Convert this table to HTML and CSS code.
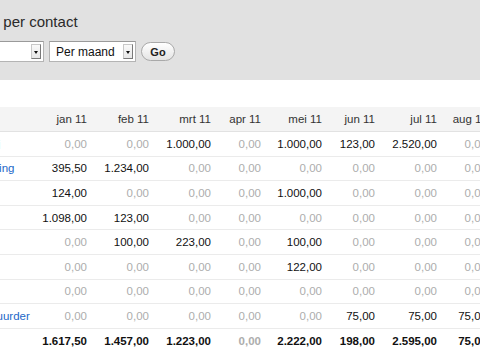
FILE: index.html
```html
<!DOCTYPE html>
<html lang="nl">
<head>
    <meta charset="UTF-8">
    <title>Omzet per contact</title>
    <link rel="stylesheet" href="styles.css">
</head>
<body>
    <div class="page">
        <div class="toolbar">
            <h1>Omzet per contact</h1>
            <form class="filters">
                <div class="select year"><span>2011</span><i class="arrow"></i></div>
                <div class="select period"><span>Per maand</span><i class="arrow"></i></div>
                <button type="button" class="go">Go</button>
            </form>
        </div>

        <table class="report">
            <thead>
                <tr>
                    <th class="name">Contact</th>
                    <th class="w62">jan 11</th>
                    <th class="w62">feb 11</th>
                    <th class="w62">mrt 11</th>
                    <th class="w50">apr 11</th>
                    <th class="w61">mei 11</th>
                    <th class="w53">jun 11</th>
                    <th class="w62">jul 11</th>
                    <th class="w50">aug 11</th>
                    <th class="w62">sep 11</th>
                </tr>
            </thead>
            <tbody>
                <tr>
                    <td class="name"><a href="#">Drukkerij</a></td>
                    <td class="zero">0,00</td><td class="zero">0,00</td><td>1.000,00</td><td class="zero">0,00</td>
                    <td>1.000,00</td><td>123,00</td><td>2.520,00</td><td class="zero">0,00</td><td class="zero">0,00</td>
                </tr>
                <tr>
                    <td class="name"><a href="#">Huisvesting</a></td>
                    <td>395,50</td><td>1.234,00</td><td class="zero">0,00</td><td class="zero">0,00</td>
                    <td class="zero">0,00</td><td class="zero">0,00</td><td class="zero">0,00</td><td class="zero">0,00</td><td class="zero">0,00</td>
                </tr>
                <tr>
                    <td class="name"><a href="#">Jansen</a></td>
                    <td>124,00</td><td class="zero">0,00</td><td class="zero">0,00</td><td class="zero">0,00</td>
                    <td>1.000,00</td><td class="zero">0,00</td><td class="zero">0,00</td><td class="zero">0,00</td><td class="zero">0,00</td>
                </tr>
                <tr>
                    <td class="name"><a href="#">Pieters</a></td>
                    <td>1.098,00</td><td>123,00</td><td class="zero">0,00</td><td class="zero">0,00</td>
                    <td class="zero">0,00</td><td class="zero">0,00</td><td class="zero">0,00</td><td class="zero">0,00</td><td class="zero">0,00</td>
                </tr>
                <tr>
                    <td class="name"><a href="#">Bosman</a></td>
                    <td class="zero">0,00</td><td>100,00</td><td>223,00</td><td class="zero">0,00</td>
                    <td>100,00</td><td class="zero">0,00</td><td class="zero">0,00</td><td class="zero">0,00</td><td class="zero">0,00</td>
                </tr>
                <tr>
                    <td class="name"><a href="#">Visser</a></td>
                    <td class="zero">0,00</td><td class="zero">0,00</td><td class="zero">0,00</td><td class="zero">0,00</td>
                    <td>122,00</td><td class="zero">0,00</td><td class="zero">0,00</td><td class="zero">0,00</td><td class="zero">0,00</td>
                </tr>
                <tr>
                    <td class="name"><a href="#">Smit</a></td>
                    <td class="zero">0,00</td><td class="zero">0,00</td><td class="zero">0,00</td><td class="zero">0,00</td>
                    <td class="zero">0,00</td><td class="zero">0,00</td><td class="zero">0,00</td><td class="zero">0,00</td><td class="zero">0,00</td>
                </tr>
                <tr>
                    <td class="name"><a href="#">De Verhuurder</a></td>
                    <td class="zero">0,00</td><td class="zero">0,00</td><td class="zero">0,00</td><td class="zero">0,00</td>
                    <td class="zero">0,00</td><td>75,00</td><td>75,00</td><td>75,00</td><td>75,00</td>
                </tr>
            </tbody>
            <tfoot>
                <tr>
                    <td class="name">Totaal</td>
                    <td>1.617,50</td><td>1.457,00</td><td>1.223,00</td><td class="zero">0,00</td>
                    <td>2.222,00</td><td>198,00</td><td>2.595,00</td><td>75,00</td><td>75,00</td>
                </tr>
            </tfoot>
        </table>
    </div>
</body>
</html>
```

FILE: styles.css
```css
html, body {
    margin: 0;
    overflow: hidden;
}
body {
    font-family: "Liberation Sans", Arial, sans-serif;
    color: #222;
    background: #fff;
}
.page {
    /* view is cropped: the left part of the report is off-screen */
    margin-left: -53px;
    width: 720px;
}
.toolbar {
    background: #e1e1e1;
    height: 80px;
    padding: 13px 0 0 8px;
    box-sizing: border-box;
}
h1 {
    margin: 0;
    font-size: 15px;
    line-height: 17px;
    font-weight: normal;
    color: #2a2a2a;
}
.filters {
    display: flex;
    align-items: center;
    gap: 5px;
    margin-top: 11px;
}
.select {
    display: flex;
    align-items: center;
    justify-content: space-between;
    height: 21px;
    box-sizing: border-box;
    padding: 0 2px 0 6px;
    background: #fff;
    border: 1px solid #b4b4b4;
    border-top-color: #9a9a9a;
    font-size: 12px;
    color: #111;
}
.select.year {
    width: 89px;
}
.select.period {
    width: 87px;
}
.arrow {
    position: relative;
    width: 8px;
    height: 13px;
    background: linear-gradient(#fafafa, #e6e6e6);
    border: 1px solid #c8c8c8;
    border-right-color: #7a7a7a;
    border-bottom-color: #7a7a7a;
}
.arrow::after {
    content: "";
    position: absolute;
    left: 2px;
    top: 6px;
    border-left: 2px solid transparent;
    border-right: 2px solid transparent;
    border-top: 3px solid #111;
}
.go {
    width: 34px;
    height: 19px;
    padding: 0;
    border: 1px solid #a9a9a9;
    border-radius: 10px;
    background: linear-gradient(#ffffff, #e4e4e4);
    font-family: "Liberation Sans", Arial, sans-serif;
    font-size: 11px;
    font-weight: bold;
    color: #222;
}
.report {
    margin-top: 27px;
    border-collapse: collapse;
    table-layout: fixed;
    width: 610px;
    font-size: 11.5px;
}
.report th,
.report td {
    padding: 0 8px 0 0;
    height: 23.6px;
    text-align: right;
    white-space: nowrap;
    border-bottom: 1px solid #ebebeb;
}
.report thead th {
    background: #f4f4f4;
    font-weight: normal;
    color: #333;
    height: 24px;
    border-bottom: 1px solid #e2e2e2;
}
.report td {
    color: #111;
}
.report td.zero {
    color: #adadad;
}
.report .name {
    width: 70px;
    padding-left: 8px;
    text-align: left;
    color: #333;
}
.report a {
    color: #2368c8;
    text-decoration: none;
}
.report tfoot td {
    font-weight: bold;
    border-top: 1px solid #c9c9c9;
    border-bottom: none;
}
.w62 { width: 54px; }
.w61 { width: 53px; }
.w53 { width: 45px; }
.w50 { width: 42px; }
```
